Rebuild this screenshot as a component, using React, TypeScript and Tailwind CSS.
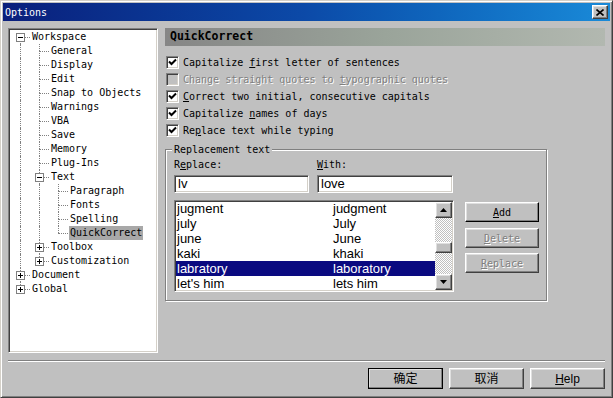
import React from "react";

const mono = "font-['DejaVu_Sans_Mono','Liberation_Mono',monospace] text-[10px]";
const sans = "font-['Liberation_Sans',Arial,sans-serif]";
const raised =
  "border border-t-white border-l-white border-r-[#404040] border-b-[#404040] shadow-[inset_-1px_-1px_0_#808080,inset_1px_1px_0_#dfdfdf] bg-[#c0c0c0]";
const sunken =
  "border border-t-[#808080] border-l-[#808080] border-r-white border-b-white shadow-[inset_1px_1px_0_#404040,inset_-1px_-1px_0_#d4d0c8]";
const etched = "[text-shadow:1px_1px_0_#fff] text-[#808080]";

type Row = {
  t: string;
  d: number;
  guides: boolean[];
  box?: "+" | "-";
  first?: boolean;
  last?: boolean;
  sel?: boolean;
};

const tree: Row[] = [
  { t: "Workspace", d: 0, guides: [], box: "-", first: true },
  { t: "General", d: 1, guides: [true] },
  { t: "Display", d: 1, guides: [true] },
  { t: "Edit", d: 1, guides: [true] },
  { t: "Snap to Objects", d: 1, guides: [true] },
  { t: "Warnings", d: 1, guides: [true] },
  { t: "VBA", d: 1, guides: [true] },
  { t: "Save", d: 1, guides: [true] },
  { t: "Memory", d: 1, guides: [true] },
  { t: "Plug-Ins", d: 1, guides: [true] },
  { t: "Text", d: 1, guides: [true], box: "-" },
  { t: "Paragraph", d: 2, guides: [true, true] },
  { t: "Fonts", d: 2, guides: [true, true] },
  { t: "Spelling", d: 2, guides: [true, true] },
  { t: "QuickCorrect", d: 2, guides: [true, true], last: true, sel: true },
  { t: "Toolbox", d: 1, guides: [true], box: "+" },
  { t: "Customization", d: 1, guides: [true], box: "+", last: true },
  { t: "Document", d: 0, guides: [], box: "+" },
  { t: "Global", d: 0, guides: [], box: "+", last: true },
];

const dot = "absolute border-dotted border-[#808080]";

const Guide = ({ on }: { on: boolean }) => (
  <div className="relative w-[19px] h-[14px] shrink-0">
    {on && <span className={`${dot} left-[10px] top-0 h-[14px] border-l`} />}
  </div>
);

const Node = ({ row }: { row: Row }) => (
  <div className="relative w-[19px] h-[14px] shrink-0">
    {!row.first && <span className={`${dot} left-[10px] top-0 h-[7px] border-l`} />}
    {!row.last && <span className={`${dot} left-[10px] top-[7px] h-[7px] border-l`} />}
    <span className={`${dot} left-[10px] top-[7px] w-[10px] border-t`} />
    {row.box && (
      <span className="absolute left-[6px] top-[3px] w-[9px] h-[9px] border border-[#808080] bg-white">
        <span className="absolute left-[1px] top-[3px] w-[5px] h-px bg-black" />
        {row.box === "+" && <span className="absolute left-[3px] top-[1px] w-px h-[5px] bg-black" />}
      </span>
    )}
  </div>
);

const Tree = () => (
  <div className={`w-[150px] h-[325px] bg-white ${sunken} p-px`}>
    {tree.map((r) => (
      <div key={r.t} className="flex h-[14px] items-center">
        {r.guides.map((g, i) => (
          <Guide key={i} on={g} />
        ))}
        <Node row={r} />
        <span
          className={`${mono} ml-[2px] px-px leading-[14px] text-black whitespace-nowrap ${r.sel ? "bg-[#a8a8a8]" : ""}`}
        >
          {r.t}
        </span>
      </div>
    ))}
  </div>
);

const Check = ({ checked, disabled, children }: { checked?: boolean; disabled?: boolean; children: React.ReactNode }) => (
  <div className="flex items-center h-[17px]">
    <span className={`w-[13px] h-[13px] ml-px ${sunken} ${disabled ? "bg-[#c0c0c0]" : "bg-white"} flex items-center justify-center`}>
      {checked && (
        <svg width="9" height="9" viewBox="0 0 9 9">
          <polyline points="1,3.5 3.5,6 8,1.5" fill="none" stroke="#000" strokeWidth="2" />
        </svg>
      )}
    </span>
    <span className={`${mono} ml-[4px] whitespace-nowrap ${disabled ? etched : "text-black"}`}>{children}</span>
  </div>
);

const words: [string, string][] = [
  ["jugment", "judgment"],
  ["july", "July"],
  ["june", "June"],
  ["kaki", "khaki"],
  ["labratory", "laboratory"],
  ["let's him", "lets him"],
];

const Arrow = ({ up }: { up?: boolean }) => (
  <div className={`w-[17px] h-[16px] ${raised} flex items-center justify-center`}>
    <svg width="7" height="4" viewBox="0 0 7 4">
      <polygon points={up ? "3.5,0 7,4 0,4" : "0,0 7,0 3.5,4"} fill="#000" />
    </svg>
  </div>
);

const SmallBtn = ({ children, disabled, def }: { children: React.ReactNode; disabled?: boolean; def?: boolean }) => (
  <div
    className={`w-[74px] h-[20px] ${raised} ${def ? "border-r-black border-b-black" : ""} flex items-center justify-center ${mono} ${disabled ? etched : "text-black"}`}
  >
    {children}
  </div>
);

const BigBtn = ({ children, def }: { children: React.ReactNode; def?: boolean }) => (
  <div className={`w-[75px] h-[21px] ${def ? "outline outline-1 outline-black -outline-offset-1" : ""} ${raised} flex items-center justify-center text-[12px] text-black font-['Liberation_Sans','Noto_Sans_CJK_SC',sans-serif]`}>
    {children}
  </div>
);

export default function App() {
  return (
    <div className="w-[613px] h-[398px] bg-[#c0c0c0] border border-t-[#d4d0c8] border-l-[#d4d0c8] border-r-[#404040] border-b-[#404040] shadow-[inset_1px_1px_0_#fff,inset_-1px_-1px_0_#808080] p-[2px] flex flex-col overflow-hidden">
      {/* title bar */}
      <div className="h-[18px] bg-linear-to-r from-[#0a1f7c] via-[#0c4aa8] to-[#1a8ad8] flex items-center justify-between pl-[2px] pr-[2px]">
        <span className={`${mono} text-white`}>Options</span>
        <div className={`w-[16px] h-[14px] ${raised} flex items-center justify-center`}>
          <svg width="8" height="7" viewBox="0 0 8 7">
            <path d="M0.5 0.5 L7.5 6.5 M7.5 0.5 L0.5 6.5" stroke="#000" strokeWidth="1.6" />
          </svg>
        </div>
      </div>

      {/* body */}
      <div className="flex mt-[7px] pl-[5px]">
        <Tree />
        <div className="ml-[7px] w-[440px] flex flex-col">
          <div className="h-[18px] bg-linear-to-r from-[#868686] via-[#9aa49a] to-[#b2b8b0] flex items-center pl-[5px]">
            <span className="font-['DejaVu_Sans_Mono',monospace] text-[11.5px] font-bold text-black">QuickCorrect</span>
          </div>

          <div className="mt-[8px] flex flex-col">
            <Check checked>
              Capitalize <u>f</u>irst letter of sentences
            </Check>
            <Check disabled>
              Change straight quotes to <u>t</u>ypographic quotes
            </Check>
            <Check checked>
              <u>C</u>orrect two initial, consecutive capitals
            </Check>
            <Check checked>
              Capitalize <u>n</u>ames of days
            </Check>
            <Check checked>
              Re<u>p</u>lace text while typing
            </Check>
          </div>

          {/* group box */}
          <div className="relative mt-[10px] w-[382px] h-[152px] border border-[#808080] shadow-[1px_1px_0_#fff,inset_1px_1px_0_#fff] pl-[8px] pt-[8px]">
            <span className={`absolute -top-[7px] left-[6px] px-[2px] bg-[#c0c0c0] leading-[14px] ${mono} text-black`}>
              Replacement text
            </span>
            <div className="flex">
              <div className="flex flex-col w-[135px]">
                <span className={`${mono} leading-[14px] text-black`}>
                  R<u>e</u>place:
                </span>
                <div className={`mt-[3px] h-[18px] bg-white ${sunken} flex items-end pl-[3px] pb-[1px] ${sans} text-[13px] leading-[14px] text-black`}>
                  lv
                </div>
              </div>
              <div className="flex flex-col w-[136px] ml-[8px]">
                <span className={`${mono} leading-[14px] text-black`}>
                  <u>W</u>ith:
                </span>
                <div className={`mt-[3px] h-[18px] bg-white ${sunken} flex items-end pl-[3px] pb-[1px] ${sans} text-[13px] leading-[14px] text-black`}>
                  love
                </div>
              </div>
            </div>

            <div className="flex mt-[7px]">
              <div className={`w-[280px] h-[92px] bg-white ${sunken} px-px flex overflow-hidden`}>
                <div className="flex-1 flex flex-col">
                  {words.map(([a, b], i) => (
                    <div
                      key={a}
                      className={`flex h-[15px] shrink-0 items-center ${sans} text-[13px] leading-[15px] ${i === 4 ? "bg-[#0a0a80] text-white" : "text-black"}`}
                    >
                      <span className="w-[157px] pl-[1px]">{a}</span>
                      <span>{b}</span>
                    </div>
                  ))}
                </div>
                <div className="w-[17px] my-px flex flex-col bg-[repeating-conic-gradient(#c0c0c0_0_25%,#ffffff_0_50%)] bg-[length:2px_2px]">
                  <Arrow up />
                  <div className="h-[24px]" />
                  <div className={`h-[11px] ${raised}`} />
                  <div className="flex-1" />
                  <Arrow />
                </div>
              </div>
              <div className="ml-[11px] mt-[2px] flex flex-col gap-[6px]">
                <SmallBtn def>
                  <u>A</u>dd
                </SmallBtn>
                <SmallBtn disabled>
                  <u>D</u>elete
                </SmallBtn>
                <div className="-mt-px">
                  <SmallBtn disabled>
                    <u>R</u>eplace
                  </SmallBtn>
                </div>
              </div>
            </div>
          </div>
        </div>
      </div>

      {/* separator */}
      <div className="mt-[7px] mx-[5px] h-[2px] border-t border-t-[#808080] border-b border-b-white" />

      {/* buttons */}
      <div className="mt-[6px] flex justify-end gap-[6px] pr-[5px]">
        <BigBtn def>确定</BigBtn>
        <BigBtn>取消</BigBtn>
        <BigBtn>
          <u>H</u>elp
        </BigBtn>
      </div>
    </div>
  );
}
